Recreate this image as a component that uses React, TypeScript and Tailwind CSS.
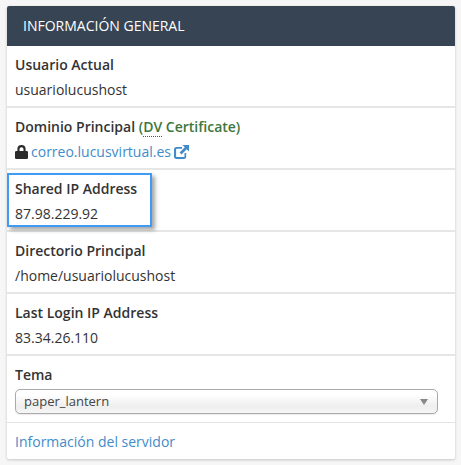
import React from "react";

const font = { fontFamily: '"Open Sans", sans-serif' };

function Row({ label, children, relative }: { label: React.ReactNode; children: React.ReactNode; relative?: boolean }) {
  return (
    <div className="relative h-[62px] border-b-2 border-[#e6e6e6] px-2 pt-[7px]">
      <div className="h-[25px] text-sm leading-6 font-semibold text-[#333]">{label}</div>
      <div className="h-6 text-sm leading-6 text-[#333]">{children}</div>
      {relative && (
        <div className="absolute left-0 top-[3px] h-[54px] w-[145px] border-[2px] border-[#3f9bf3] shadow-[3px_3px_4px_rgba(0,0,0,0.35)]" />
      )}
    </div>
  );
}

export default function App() {
  return (
    <div className="h-[465px] w-[461px] bg-[#f6f6f6] pl-[7px] pt-[6px]" style={font}>
      <div className="h-[453px] w-[448px] overflow-hidden rounded-[2px] bg-white shadow-[0_1px_3px_rgba(0,0,0,0.2)]">
        <div className="flex h-[40px] items-center bg-[#364454] pl-4 text-sm text-white">INFORMACIÓN GENERAL</div>
        <Row label="Usuario Actual">usuariolucushost</Row>
        <Row
          label={
            <>
              Dominio Principal{" "}
              <span className="text-[#3c763d]">
                (<span className="border-b border-dotted border-[#555]">DV</span> Certificate)
              </span>
            </>
          }
        >
          <span className="inline-flex items-center">
            <svg width="13" height="14" viewBox="0 0 13 14" className="mr-[3px] shrink-0">
              <path fill="#2b2b2b" d="M2.400 6V4.100a4.100 4.100 0 0 1 8.200 0V6h1.100A1.300 1.300 0 0 1 13 7.300v5.400a1.300 1.300 0 0 1-1.300 1.300H1.300A1.300 1.300 0 0 1 0 12.700V7.300A1.300 1.300 0 0 1 1.300 6Zm2.100 0h4V4.200a2 2 0 0 0-4 0Z" />
            </svg>
            <span className="text-[#428bca]">correo.lucusvirtual.es</span>
            <svg width="15" height="14" viewBox="0 0 15 14" className="ml-[3px] shrink-0">
              <path fill="#428bca" d="M2.500 2H8v1.700H3a.9.9 0 0 0-.9.9v6.600c0 .5.4.9.9.9h6.600c.5 0 .9-.4.9-.9V8h1.700v3.500A2.500 2.500 0 0 1 9.700 14H2.500A2.500 2.500 0 0 1 0 11.500v-7A2.500 2.500 0 0 1 2.500 2Z" />
              <path fill="#428bca" d="M8.500 0H15v6.500l-2.300-2.300-5.200 5.200-1.900-1.900 5.200-5.200Z" />
            </svg>
          </span>
        </Row>
        <Row label="Shared IP Address" relative>87.98.229.92</Row>
        <Row label="Directorio Principal">/home/usuariolucushost</Row>
        <Row label="Last Login IP Address">83.34.26.110</Row>
        <div className="h-[67px] border-b border-[#e4e4e4] px-2 pt-[7px]">
          <div className="h-6 text-sm leading-6 font-semibold text-[#333]">Tema</div>
          <div className="mt-[2px] flex h-[25px] w-[423px] items-center justify-between rounded-[5px] border border-[#aaa] bg-gradient-to-b from-white from-20% via-[#eeeeee] via-70% to-[#f6f6f6] pl-2 pr-[9px] text-[13px] text-[#444] shadow-[0_1px_1px_rgba(0,0,0,0.08)]">
            <span className="pt-px">paper_lantern</span>
            <span className="h-0 w-0 border-x-[4px] border-t-[6px] border-x-transparent border-t-[#888]" />
          </div>
        </div>
        <div className="px-2 pt-[7px] text-sm leading-6 text-[#428bca]">Información del servidor</div>
      </div>
    </div>
  );
}
